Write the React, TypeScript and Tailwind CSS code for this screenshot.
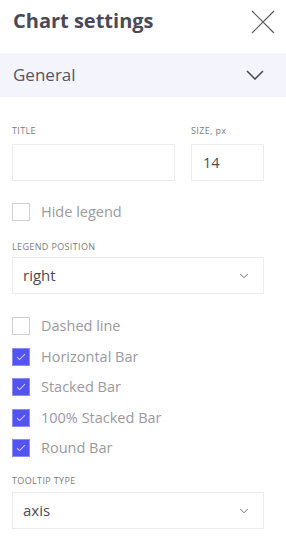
import { ChevronDown } from 'lucide-react'

const font = { fontFamily: '"Open Sans", "Noto Sans", sans-serif' }

function Check({ checked, label }: { checked: boolean; label: string }) {
  return (
    <label className="flex h-[18px] items-center gap-[11px]">
      {checked ? (
        <span className="flex h-[18px] w-[18px] items-center justify-center border border-[#8c8cf5] bg-[#5353f0]">
          <svg width="10" height="8" viewBox="0 0 10 8" fill="none">
            <path d="M1 4.2 3.6 6.6 9 1.2" stroke="#c9c9ff" strokeWidth="1.1" />
          </svg>
        </span>
      ) : (
        <span className="h-[18px] w-[18px] border border-[#cfcfd4] bg-white" />
      )}
      <span className="text-[14.5px] text-[#9a9aa0]">{label}</span>
    </label>
  )
}

function Label({ children }: { children: string }) {
  return <div className="text-[9px] leading-none tracking-[0.04em] text-[#7b7b82] uppercase">{children}</div>
}

function Select({ value }: { value: string }) {
  return (
    <div className="flex h-[37px] w-[252px] items-center justify-between border border-[#ececef] pl-[10px] pr-[12px]">
      <span className="text-[15px] text-[#4b4b55]">{value}</span>
      <ChevronDown size={14} strokeWidth={1.4} className="text-[#555]" />
    </div>
  )
}

export default function App() {
  return (
    <div className="h-[538px] w-[286px] bg-white" style={font}>
      <div className="flex h-[53px] items-start justify-between pl-[13px] pr-[11px] pt-[6px]">
        <h1 className="text-[20px] font-bold text-[#4a4a55]">Chart settings</h1>
        <svg width="24" height="24" viewBox="0 0 24 24" className="mt-[4px]">
          <path d="M1 1 23 23M23 1 1 23" stroke="#5a5a60" strokeWidth="1.2" />
        </svg>
      </div>
      <div className="flex h-[44px] items-center justify-between bg-[#f4f5fc] pl-[13px] pr-[22px]">
        <span className="text-[17px] text-[#55555e]">General</span>
        <svg width="18" height="10" viewBox="0 0 18 10">
          <path d="M1 1 9 9 17 1" stroke="#4a4a55" strokeWidth="1.6" fill="none" />
        </svg>
      </div>
      <div className="px-[12px]">
        <div className="mt-[29px] flex gap-[16px]">
          <div className="w-[163px]">
            <Label>Title</Label>
            <div className="mt-[9px] h-[37px] border border-[#ececef]" />
          </div>
          <div className="w-[73px]">
            <div className="text-[9px] leading-none tracking-[0.04em] text-[#7b7b82]">SIZE, px</div>
            <div className="mt-[9px] flex h-[37px] items-center border border-[#ececef] pl-[11px] text-[14.5px] text-[#4b4b55]">
              14
            </div>
          </div>
        </div>
        <div className="mt-[22px]">
          <Check checked={false} label="Hide legend" />
        </div>
        <div className="mt-[21px]">
          <Label>Legend position</Label>
        </div>
        <div className="mt-[6px]">
          <Select value="right" />
        </div>
        <div className="mt-[23px] flex flex-col gap-[12.5px]">
          <Check checked={false} label="Dashed line" />
          <Check checked label="Horizontal Bar" />
          <Check checked label="Stacked Bar" />
          <Check checked label="100% Stacked Bar" />
          <Check checked label="Round Bar" />
        </div>
        <div className="mt-[19px]">
          <Label>Tooltip type</Label>
        </div>
        <div className="mt-[7px]">
          <Select value="axis" />
        </div>
      </div>
    </div>
  )
}
